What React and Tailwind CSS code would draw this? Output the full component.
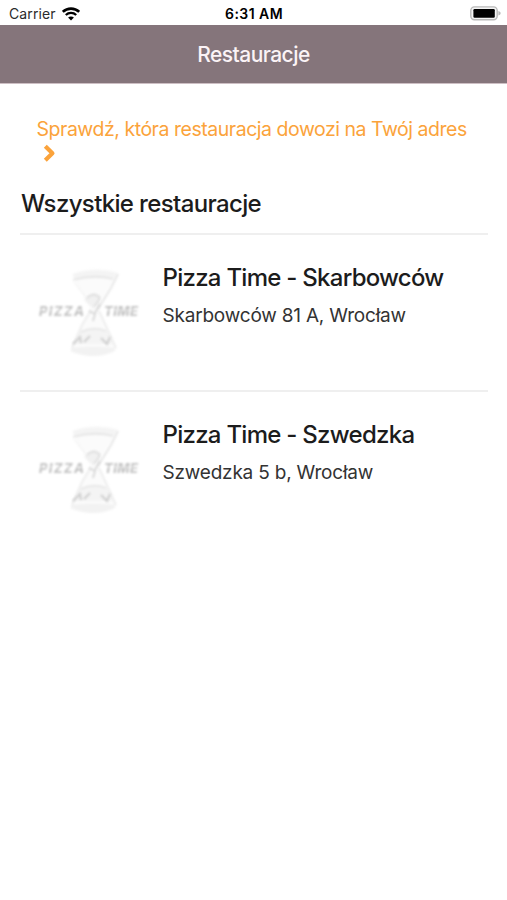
import React from 'react';

const restaurants = [
    { id: 1, name: 'Pizza Time - Skarbowców', address: 'Skarbowców 81 A, Wrocław' },
    { id: 2, name: 'Pizza Time - Szwedzka', address: 'Szwedzka 5 b, Wrocław' },
];

const WifiIcon = () => (
    <svg className="w-[18px] h-[14px]" viewBox="0 0 18 14" fill="none">
        <path d="M0.8 4.9C5.3 0.5 12.7 0.5 17.2 4.9" stroke="#000" strokeWidth="2.6" />
        <path d="M3.8 8C6.7 5.2 11.3 5.2 14.2 8" stroke="#000" strokeWidth="2.3" />
        <path d="M9 13.6L6.1 10.6C7.7 9.1 10.3 9.1 11.9 10.6Z" fill="#000" />
    </svg>
);

const BatteryIcon = () => (
    <svg className="w-[31px] h-[15px]" viewBox="0 0 31 15" fill="none">
        <rect x="0.8" y="0.9" width="26.4" height="12.8" rx="3.6" fill="#f4f4f4" stroke="#b9b9b9" strokeWidth="1.4" />
        <rect x="3.4" y="3" width="21.4" height="8.8" rx="1.2" fill="#000" />
        <path d="M28.4 5C30 5.5 30.6 6.3 30.6 7.3C30.6 8.3 30 9.1 28.4 9.6Z" fill="#b9b9b9" />
    </svg>
);

// Faded hourglass logo with the brand name across the middle
const PizzaTimeLogo = () => (
    <svg className="w-[104px] h-[104px]" viewBox="0 0 104 104" fill="none">
        <g className="blur-[1px]">
            <path d="M35 14Q58 5 81 12L60 49L79 90Q57 101 33 92L53 49Z" fill="#fbfbfb" />
            <path d="M36 14Q58 7 80 13L76 19Q58 15 37 20Z" fill="#f4f4f4" />
            <path d="M36 20Q57 14 76 19" stroke="#e6e6e6" strokeWidth="1.8" />
            <path d="M81 14L74 28L61 49" stroke="#e8e8e8" strokeWidth="2" />
            <path d="M37 22L45 32L53 42" stroke="#f5f5f5" strokeWidth="1.6" />
            <path d="M47 40Q56 28 64 37L57 49Z" fill="#f1f1f1" />
            <path d="M54 50L45 65L35 88M62 51L69 66L79 88" stroke="#eeeeee" strokeWidth="2" />
            <path d="M43 71Q57 64 71 71L76 84H38Z" fill="#f4f4f4" />
            <path d="M44 72Q57 66 69 71" stroke="#e6e6e6" strokeWidth="1.6" />
            <path d="M34 88Q57 85 78 88V91Q57 101 34 91Z" fill="#f2f2f2" />
        </g>
        <g className="blur-[0.8px]">
            <path d="M50 38Q57 32 62 37Q63 41 57 46" stroke="#dddddd" strokeWidth="1.6" />
            <path d="M52 51L58 54L56 61M63 44L58 53" stroke="#d8d8d8" strokeWidth="1.8" />
            <path d="M36 84L43 77L44 83M47 82L53 76M64 78L70 84L73 77" stroke="#cfcfcf" strokeWidth="2" />
            <g fill="#c4c4c4" fontFamily="Inter, sans-serif" fontSize="13" fontWeight="800" fontStyle="italic">
                <text x="2" y="56" textLength="45" lengthAdjust="spacing">PIZZA</text>
                <text x="67" y="56" textLength="34" lengthAdjust="spacing">TIME</text>
            </g>
            <path d="M3 50H46M68 50H100" stroke="#fff" strokeWidth="1.2" opacity="0.7" />
        </g>
    </svg>
);

const StatusBar = () => (
    <div className="grid grid-cols-3 items-center h-[25px] pl-[9px] pr-[6px] pt-[2px] text-[14px]">
        <div className="flex items-center gap-[6px]">
            <span className="tracking-[0.1px] text-[#2b2b2b]">Carrier</span>
            <WifiIcon />
        </div>
        <span className="pr-[2px] text-center font-semibold tracking-[0.45px] text-black">6:31 AM</span>
        <div className="flex justify-end">
            <BatteryIcon />
        </div>
    </div>
);

const RestaurantRow = ({ name, address }) => (
    <li className="flex h-[157px] border-t-2 border-[#efefef] pt-[25px] pl-[17px]">
        <PizzaTimeLogo />
        <div className="pl-[21.5px]">
            <h3 className="text-2xl leading-[36px] font-medium tracking-[-0.73px] whitespace-nowrap">{name}</h3>
            <p className="mt-[4px] text-[19px] leading-[32px] tracking-[-0.2px] text-[#333] whitespace-nowrap">{address}</p>
        </div>
    </li>
);

const App = () => {
    return (
        <div className="min-h-screen bg-white font-['Inter',sans-serif] text-[#1c1c1c]">
            <StatusBar />

            <header className="flex items-center justify-center h-[59px] pt-[2px] bg-[#85757b] border-b border-[#cdbfc4]">
                <h1 className="text-[21px] font-medium tracking-[-0.55px] text-[#fbf3f6]">Restauracje</h1>
            </header>

            <main className="pl-5 pr-[19px]">
                <a className="block pt-[31px] pl-[16.5px] text-[#fba33b]">
                    <span className="block text-[19.5px] leading-[28px] tracking-[-0.47px] whitespace-nowrap">Sprawdź, która restauracja dowozi na Twój adres</span>
                    <svg className="w-[13px] h-[18px] ml-[6px] mt-[1px]" viewBox="0 0 13 18" fill="none">
                        <path d="M2.3 2.2L9.4 9.2L2.3 16.2" stroke="currentColor" strokeWidth="4.2" strokeLinejoin="round" />
                    </svg>
                </a>

                <h2 className="mt-[24px] h-[47px] pl-[1px] text-2xl leading-[36px] font-medium tracking-[-0.64px]">Wszystkie restauracje</h2>

                <ul>
                    {restaurants.map((item) => (
                        <RestaurantRow key={item.id} name={item.name} address={item.address} />
                    ))}
                </ul>
            </main>
        </div>
    );
};

export default App;
